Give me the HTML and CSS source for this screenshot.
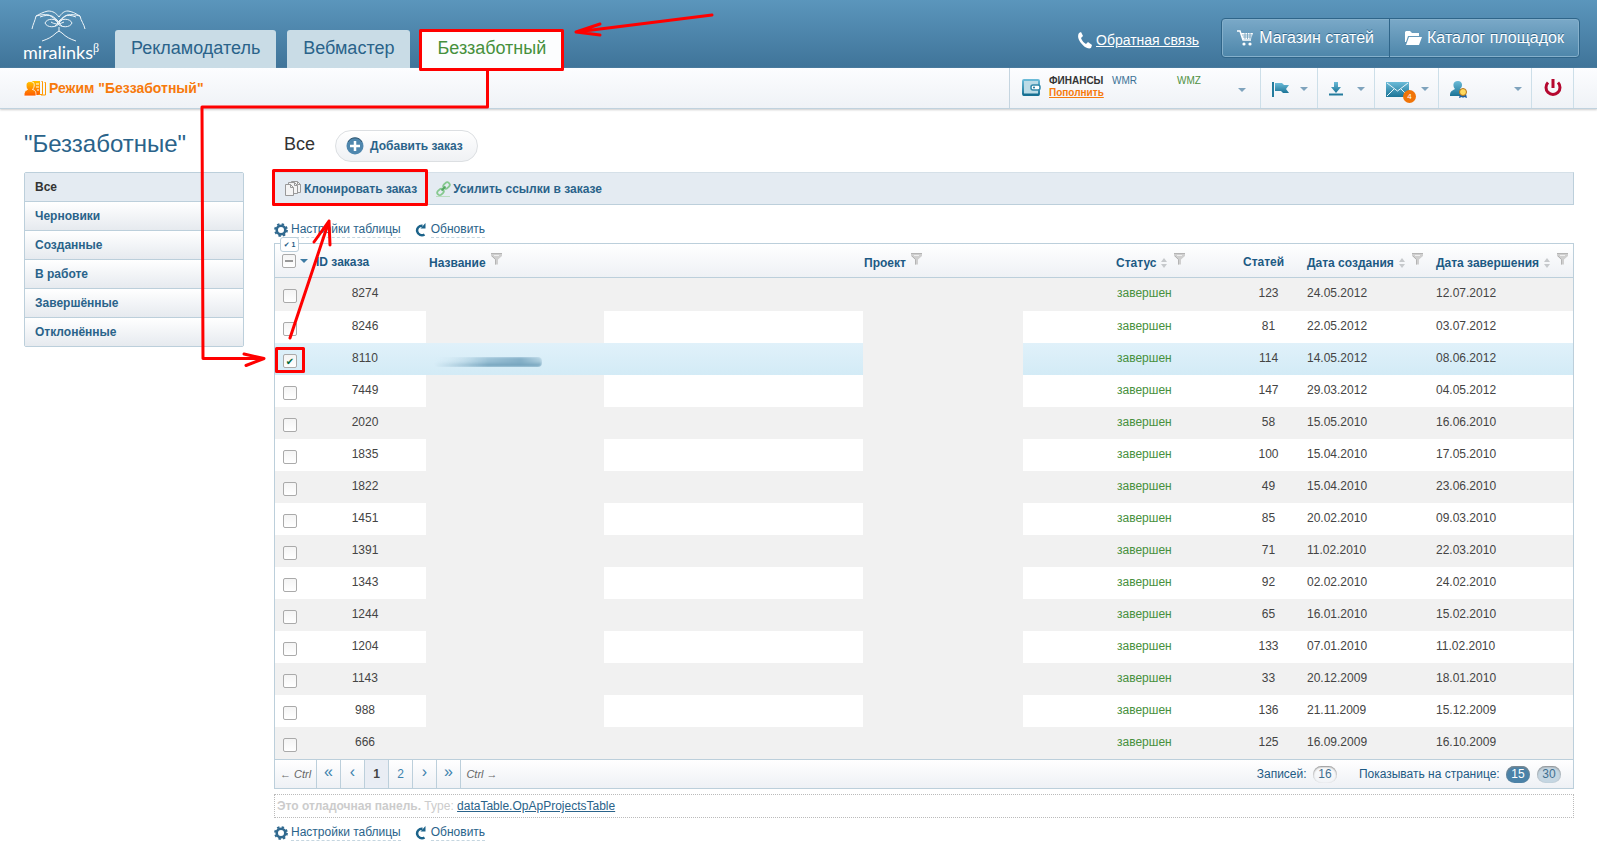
FILE: index.html
```
<!DOCTYPE html>
<html lang="ru">
<head>
  <meta charset="UTF-8">
  <meta name="viewport" content="width=device-width, initial-scale=1.0">
  <title>Miralinks - Беззаботный</title>
  <link rel="stylesheet" href="styles.css">
</head>
<body>
  <svg class="sprite" aria-hidden="true">
    <defs>
      <linearGradient id="teal" x1="0" y1="0" x2="0" y2="1"><stop offset="0" stop-color="#6bbbd8"/><stop offset="1" stop-color="#1b7497"/></linearGradient>
      <linearGradient id="fire" x1="0" y1="0" x2="0" y2="1"><stop offset="0" stop-color="#ffc400"/><stop offset="1" stop-color="#ff5a00"/></linearGradient>
    </defs>
    <symbol id="funnel" viewBox="0 0 12 12"><path d="M0 0h11v3L7 6.500v5H4v-5L0 3z" fill="#cfcfcf"/><path d="M0 .5h11M1 3l3.500 3.500v5" fill="none" stroke="#b4b4b4"/><path d="M3 2.500h5" stroke="#eee"/></symbol>
    <symbol id="sort" viewBox="0 0 6 10"><path d="M3 0l3 4H0zM3 10l3-4H0z" fill="#c6c9cc"/></symbol>
    <symbol id="gear" viewBox="0 0 14 14">
      <circle cx="7" cy="7" r="4.300" fill="none" stroke="#30698f" stroke-width="2.600"/>
      <circle cx="7" cy="7" r="6" fill="none" stroke="#30698f" stroke-width="1.800" stroke-dasharray="2.400 2.312"/>
    </symbol>
    <symbol id="reload" viewBox="0 0 14 14"><path d="M10.500 11.500A4.800 4.800 0 1 1 8.500 2.700" fill="none" stroke="#1c638a" stroke-width="2.500"/><path d="M11.500 0v5.500H6.500z" fill="#1c638a"/></symbol>
  </svg>

  <header class="header">
    <a class="logo" href="#">
      <svg width="56" height="32" viewBox="0 0 56 32" fill="none" stroke="#eef5f9" stroke-width="1">
        <path d="M1 19C2 14 4 11 5 6c4-2 7-4 12-5 5 0 8 2 11 6M54 19C53 14 50 11 49 6 45 4 43 2 37 1c-4 0-6 2-9 6"/>
        <path d="M5 6c4-1 8-2 13-1l9 6M49 6c-4-1-8-2-13-1l-8 6M9 7c5-2 9-2 12-1 3 2 5 3 6 6M45 7c-5-2-8-2-11-1-3 2-4 3-6 6"/>
        <path d="M14 13c2-5 11-5 15 0-4 5-13 5-15 0zM26 13c4-5 13-5 15 0-2 5-11 5-15 0zM20 12c3 2 7 3 13 0M24 10l7 6M31 10l-7 6"/>
        <path d="M11 31c6-2 10-4 14-8l3-2 3 2c4 4 8 6 14 8M28 17v5"/>
      </svg>
      <span class="logo-name">miralinks<sup>β</sup></span>
    </a>
    <nav class="tabs">
      <a class="tab" href="#">Рекламодатель</a>
      <a class="tab" href="#">Вебмастер</a>
      <a class="tab active" href="#">Беззаботный</a>
    </nav>
    <a class="feedback" href="#">
      <svg width="16" height="17" viewBox="0 0 16 17"><path d="M2 1l2-1 2 4-2 2c1 3 3 5 5 6l2-2 4 3-1 3c-2 1-4 0-6-1C4 12-1 6 2 1z" fill="#fff"/></svg>
      <span>Обратная связь</span>
    </a>
    <div class="store">
      <a href="#">
        <svg width="17" height="16" viewBox="0 0 17 16"><path d="M0 1h3l3 9h8" fill="none" stroke="#fff" stroke-width="1.500"/><path d="M4 3h12l-2 6H6z" fill="#fff"/><path d="M5 5h10M6 7h9M8 3v6M10.500 3v6M13 3v6" stroke="#5c93b5" stroke-width=".7"/><circle cx="7" cy="14" r="1.600" fill="#fff"/><circle cx="13" cy="14" r="1.600" fill="#fff"/></svg>
        Магазин статей
      </a>
      <a href="#">
        <svg width="17" height="16" viewBox="0 0 17 16" fill="#fff"><path d="M0 2l1-1h4l2 2h7v3H3L1 12H0z"/><path d="M4 7h13l-3 8H1z"/></svg>
        Каталог площадок
      </a>
    </div>
  </header>

  <div class="subbar">
    <div class="mode">
      <svg width="22" height="17" viewBox="0 0 22 17">
        <path d="M8 1h8v14h-6z" fill="url(#fire)"/><path d="M17.500 1.500h1v13h-4M20.500 2.500h1V15H17" fill="none" stroke="#ff9a00"/>
        <path d="M12 4h3M12 7h3M13 10h2M9 3h1" stroke="#fff"/>
        <path d="M6 1.500c6 0 4.500 6 2.500 8 3 1 3.500 2 3.500 6.500H0c0-4 1-5.500 3.500-6.500C1.500 7.500 1 1.500 6 1.500z" fill="url(#fire)" stroke="#fcfdff" stroke-width=".8"/>
      </svg>
      Режим "Беззаботный"
    </div>
    <div class="finance">
      <svg width="19" height="17" viewBox="0 0 19 17"><rect x="1" y="1" width="16" height="15" rx="1" fill="#bcdbe6" stroke="url(#teal)" stroke-width="2"/><path d="M1 15.500h16" stroke="#176f91" stroke-width="2"/><rect x="9" y="6" width="9" height="5" rx="2" fill="#fff" stroke="#3489a9" stroke-width="1.500"/><circle cx="12" cy="8.500" r="1" fill="#1b7497"/></svg>
      <div class="finance-text"><b>ФИНАНСЫ</b><a href="#">Пополнить</a></div>
      <span class="wmr">WMR</span>
      <span class="wmz">WMZ</span>
      <i class="arrow"></i>
    </div>
    <div class="tool">
      <svg width="18" height="16" viewBox="0 0 18 16"><path d="M1 1v15" stroke="#237b9d" stroke-width="2"/><path d="M3 2h7l2 2h5l-3 4 3 4h-6l-2-2H3z" fill="url(#teal)"/></svg>
      <i class="arrow"></i>
    </div>
    <div class="tool">
      <svg width="14" height="14" viewBox="0 0 14 14"><path d="M5 0h4v5h3l-5 6-5-6h3z" fill="url(#teal)"/><path d="M0 12.500h14" stroke="#237b9d" stroke-width="2"/></svg>
      <i class="arrow"></i>
    </div>
    <div class="tool mail">
      <span class="envelope">
        <svg width="23" height="15" viewBox="0 0 23 15"><path d="M0 0h23v15H0z" fill="url(#teal)"/><path d="M1 1l10.500 8L22 1M1 14l7-7M22 14l-7-7" fill="none" stroke="#e8f5fa"/></svg>
        <span class="badge">4</span>
      </span>
      <i class="arrow"></i>
    </div>
    <div class="tool user">
      <svg width="18" height="19" viewBox="0 0 18 19"><path d="M8 1c5 0 5 6 2 8 3 1 5 2 5 7H0c0-4 1-5 5-7C3 7 2 1 8 1z" fill="url(#teal)"/><path d="M10 14l-1 4 3-1 1 1 1-1 3 1-1-4" fill="#1f5fa0"/><circle cx="13" cy="12" r="3.500" fill="#ffd95e" stroke="#b3731a"/></svg>
      <i class="arrow"></i>
    </div>
    <div class="tool power">
      <svg width="18" height="18" viewBox="0 0 18 18" fill="none" stroke="#b5072f" stroke-width="3"><path d="M4 3.500a7 7 0 1 0 10 0M9 0v9"/></svg>
    </div>
  </div>

  <div class="page">
    <aside class="sidebar">
      <h1>"Беззаботные"</h1>
      <ul class="menu">
        <li class="current"><a href="#">Все</a></li>
        <li><a href="#">Черновики</a></li>
        <li><a href="#">Созданные</a></li>
        <li><a href="#">В работе</a></li>
        <li><a href="#">Завершённые</a></li>
        <li><a href="#">Отклонённые</a></li>
      </ul>
    </aside>

    <main class="content">
      <div class="title">
        <h2>Все</h2>
        <button class="add" type="button">
          <svg width="18" height="18" viewBox="0 0 18 18"><circle cx="9" cy="9" r="8.500" fill="#4f87ae"/><path d="M2 5a8 8 0 0 1 14 0" fill="none" stroke="#33566e"/><path d="M9 4v10M4 9h10" stroke="#fff" stroke-width="2.500"/></svg>
          Добавить заказ
        </button>
      </div>

      <div class="actions">
        <a href="#">
          <svg width="17" height="17" viewBox="0 0 17 17" fill="#f4f4f4" stroke="#999"><path d="M6.500 1.500h6l3 3v8h-9z"/><path d="M3.500 2.500h6l3 3v8h-9z"/><path d="M.5 4.500h5l3 3v8h-8z"/><path d="M5.500 4.500v3h3M9.500 2.500v3h3M12.500 1.500v3h3" fill="none"/></svg>
          Клонировать заказ
        </a>
        <a href="#">
          <svg width="15" height="16" viewBox="0 0 15 16" fill="none" stroke="#86c98f" stroke-width="1.800"><rect x="7" y="2" width="7" height="5" rx="2.500" transform="rotate(-45 10.500 4.500)"/><rect x="1" y="8.500" width="7" height="5" rx="2.500" transform="rotate(-45 4.500 11)"/><path d="M5.500 9.500l4-4" stroke="#55a763"/><path d="M0 15.500h14" stroke="#b9dcbf" stroke-width="1"/></svg>
          Усилить ссылки в заказе
        </a>
      </div>

      <div class="table-links">
        <svg width="14" height="14"><use href="#gear"/></svg><a href="#">Настройки таблицы</a>
        <svg width="14" height="14"><use href="#reload"/></svg><a href="#">Обновить</a>
      </div>

      <div class="grid">
        <table>
          <colgroup>
            <col class="c-check"><col class="c-id"><col><col class="c-project"><col class="c-status"><col class="c-count"><col class="c-created"><col class="c-done">
          </colgroup>
          <thead>
            <tr>
              <th class="pick">
                <span class="picked">✔ 1</span>
                <input type="checkbox" class="partial" aria-label="Выбрать все"><i class="arrow"></i>
              </th>
              <th class="id">ID заказа</th>
              <th>Название<svg class="funnel" width="12" height="12"><use href="#funnel"/></svg></th>
              <th>Проект<svg class="funnel" width="12" height="12"><use href="#funnel"/></svg></th>
              <th>Статус<svg class="sort" width="6" height="10"><use href="#sort"/></svg><svg class="funnel" width="12" height="12"><use href="#funnel"/></svg></th>
              <th>Статей</th>
              <th class="created">Дата создания<svg class="sort" width="6" height="10"><use href="#sort"/></svg><svg class="funnel" width="12" height="12"><use href="#funnel"/></svg></th>
              <th>Дата завершения<svg class="sort" width="6" height="10"><use href="#sort"/></svg><svg class="funnel" width="12" height="12"><use href="#funnel"/></svg></th>
            </tr>
          </thead>
          <tbody id="orders"></tbody>
        </table>
        <div class="pager">
          <span class="key">← Ctrl</span>
          <a class="step" href="#">«</a>
          <a class="step" href="#">‹</a>
          <a class="now" href="#">1</a>
          <a href="#">2</a>
          <a class="step" href="#">›</a>
          <a class="step" href="#">»</a>
          <span class="key last">Ctrl →</span>
          <span class="total">Записей: <span class="pill">16</span></span>
          <span class="per-page">Показывать на странице: <a class="pill on" href="#">15</a><a class="pill off" href="#">30</a></span>
        </div>
      </div>

      <div class="debug"><b>Это отладочная панель.</b> Type: <a href="#">dataTable.OpApProjectsTable</a></div>

      <div class="table-links bottom">
        <svg width="14" height="14"><use href="#gear"/></svg><a href="#">Настройки таблицы</a>
        <svg width="14" height="14"><use href="#reload"/></svg><a href="#">Обновить</a>
      </div>
    </main>
  </div>

  <!-- hints drawn over the page -->
  <svg class="hints" width="720" height="380" fill="none" stroke="#f00" stroke-width="3" stroke-linejoin="round" stroke-linecap="round">
    <rect x="420.500" y="30.500" width="142" height="39"/>
    <path d="M712 15L576 32M600 24l-24 8 24 3"/>
    <path d="M487.500 71v36H202l1 251.500h60M244 354l20 4.500-18 7"/>
    <rect x="273.500" y="170.500" width="153" height="34"/>
    <rect x="276.500" y="348.500" width="27" height="23"/>
    <path d="M290 338l39-117M314 242l15-21 1 24"/>
  </svg>

  <script>
    var orders = [
      ['8274', '123', '24.05.2012', '12.07.2012'],
      ['8246', '81', '22.05.2012', '03.07.2012'],
      ['8110', '114', '14.05.2012', '08.06.2012'],
      ['7449', '147', '29.03.2012', '04.05.2012'],
      ['2020', '58', '15.05.2010', '16.06.2010'],
      ['1835', '100', '15.04.2010', '17.05.2010'],
      ['1822', '49', '15.04.2010', '23.06.2010'],
      ['1451', '85', '20.02.2010', '09.03.2010'],
      ['1391', '71', '11.02.2010', '22.03.2010'],
      ['1343', '92', '02.02.2010', '24.02.2010'],
      ['1244', '65', '16.01.2010', '15.02.2010'],
      ['1204', '133', '07.01.2010', '11.02.2010'],
      ['1143', '33', '20.12.2009', '18.01.2010'],
      ['988', '136', '21.11.2009', '15.12.2009'],
      ['666', '125', '16.09.2009', '16.10.2009']
    ];
    var html = '';
    orders.forEach(function (o) {
      var picked = o[0] === '8110';
      html += '<tr' + (picked ? ' class="selected"' : '') + '>' +
        '<td class="pick"><input type="checkbox" aria-label="Заказ ' + o[0] + '"' + (picked ? ' checked' : '') + '></td>' +
        '<td class="center">' + o[0] + '</td>' +
        '<td class="name">' + (picked ? '<span class="smudge"></span>' : '') + '</td>' +
        '<td class="project"></td>' +
        '<td class="status">завершен</td>' +
        '<td class="center">' + o[1] + '</td>' +
        '<td class="created">' + o[2] + '</td>' +
        '<td class="done">' + o[3] + '</td></tr>';
    });
    document.getElementById('orders').innerHTML = html;
  </script>
</body>
</html>
```
FILE: styles.css
```
* {
  box-sizing: border-box;
}
body {
  margin: 0;
  font-family: "Liberation Sans", Arial, sans-serif;
  font-size: 12px;
  line-height: 16px;
  color: #444;
  background: #fff;
}
a {
  color: #2a638a;
}
svg {
  flex: none;
}
.sprite {
  position: absolute;
  width: 0;
  height: 0;
}
.arrow {
  flex: none;
  width: 0;
  height: 0;
  border: 4px solid transparent;
  border-top-color: #7fa3bd;
  border-bottom: 0;
}

/* header */
.header {
  display: flex;
  height: 68px;
  padding: 0 17px 0 23px;
  background: linear-gradient(#5b96bc, #3f7499);
}
.logo {
  width: 92px;
  padding-top: 10px;
  color: #fff;
  text-decoration: none;
}
.logo svg {
  display: block;
  margin-left: 8px;
}
.logo-name {
  display: block;
  font-family: Lato, sans-serif;
  font-size: 18px;
  line-height: 20px;
}
.logo sup {
  font-family: "Liberation Serif", serif;
  font-size: 12px;
  line-height: 0;
}
.tabs {
  display: flex;
  gap: 11px;
  align-items: flex-end;
}
.tab {
  height: 38px;
  padding: 0 16px;
  border-radius: 3px 3px 0 0;
  background: #c9dce6;
  font-size: 18px;
  line-height: 36px;
  text-decoration: none;
}
.tab.active {
  background: #fcfdfe;
  color: #46903c;
}
.feedback {
  display: flex;
  gap: 3px;
  align-items: center;
  margin: 12px 22px 0 auto;
  color: #fff;
  font-size: 14px;
}
.store {
  display: flex;
  height: 40px;
  margin-top: 18px;
  border: 1px solid #2f6589;
  border-radius: 4px;
  background: linear-gradient(#7aa9c8, #4d86aa);
  box-shadow: inset 0 0 0 1px #85b0cb;
}
.store a {
  display: flex;
  gap: 5px;
  align-items: center;
  padding: 0 15px;
  color: #fff;
  font-size: 16px;
  text-decoration: none;
  text-shadow: 0 -1px 0 #2f6589;
}
.store a + a {
  border-left: 1px solid #2f6589;
}

/* second bar */
.subbar {
  display: flex;
  height: 41px;
  padding: 0 23px 0 24px;
  border-bottom: 1px solid #c0d2de;
  background: linear-gradient(#fcfdff, #eff2f6);
  box-shadow: 0 1px 2px #ccc;
}
.mode {
  display: flex;
  gap: 3px;
  align-items: center;
  margin-right: auto;
  color: #f77a0c;
  font-size: 14px;
  font-weight: bold;
}
.finance {
  display: flex;
  width: 251px;
  padding: 6px 14px 0 12px;
  border-left: 1px solid #c5d5e0;
  font-size: 10px;
  line-height: 13px;
}
.finance svg {
  margin: 5px 8px 0 0;
}
.finance-text {
  width: 63px;
}
.finance-text b {
  display: block;
  color: #333;
}
.finance-text a {
  display: block;
  color: #f77a0c;
  font-weight: bold;
  line-height: 12px;
}
.wmr {
  width: 65px;
  color: #3b7195;
}
.wmz {
  color: #4f9142;
}
.finance .arrow {
  margin: 14px 0 0 auto;
}
.tool {
  display: flex;
  align-items: center;
  justify-content: space-between;
  width: 57px;
  padding: 2px 9px 0 11px;
  border-left: 1px solid #cddfe9;
}
.tool.mail {
  width: 64px;
}
.tool.user {
  width: 93px;
}
.tool.power {
  width: 43px;
  padding: 0 12px;
  border-right: 1px solid #cddfe9;
}
.envelope {
  position: relative;
  height: 15px;
}
.envelope svg {
  display: block;
}
.badge {
  position: absolute;
  top: 8px;
  left: 17px;
  width: 13px;
  height: 13px;
  border-radius: 50%;
  background: #f07408;
  color: #fff;
  font-size: 8px;
  line-height: 13px;
  text-align: center;
}

/* page */
.page {
  display: flex;
  gap: 30px;
  padding: 20px 23px 0 24px;
}
.sidebar {
  flex: none;
  width: 220px;
}
h1 {
  height: 43px;
  margin: 0;
  color: #2a638a;
  font-size: 24px;
  font-weight: normal;
  line-height: 30px;
}
.menu {
  margin: 0;
  padding: 0;
  border: 1px solid #bccfdb;
  border-radius: 2px;
  list-style: none;
}
.menu li {
  background: linear-gradient(#fff, #e6eaef);
}
.menu li + li {
  border-top: 1px solid #bccfdb;
}
.menu .current {
  background: #e4ebf2;
}
.menu a {
  display: block;
  padding: 0 10px;
  font-size: 12px;
  font-weight: bold;
  line-height: 28px;
  text-decoration: none;
}
.menu .current a {
  color: #333;
}
.content {
  flex: 1;
  min-width: 0;
}
.title {
  display: flex;
  gap: 20px;
  height: 43px;
  padding-left: 10px;
}
h2 {
  margin: 0;
  color: #333;
  font-size: 18px;
  font-weight: normal;
  line-height: 30px;
}
.add {
  display: flex;
  gap: 6px;
  align-items: center;
  height: 32px;
  margin-top: 1px;
  padding: 0 14px 0 10px;
  border: 1px solid #dcdfe2;
  border-radius: 16px;
  background: linear-gradient(#fff, #eff1f4);
  color: #2a638a;
  font: bold 12px "Liberation Sans", Arial, sans-serif;
}
.actions {
  display: flex;
  gap: 19px;
  height: 33px;
  padding-left: 10px;
  border: 1px solid #bccfdb;
  border-top-color: #d5e0e8;
  background: #e4ebf2;
}
.actions a {
  display: flex;
  gap: 2px;
  align-items: center;
  font-weight: bold;
  text-decoration: none;
}
.table-links {
  display: flex;
  gap: 3px;
  align-items: center;
  padding: 16px 0 5px;
}
.table-links a {
  margin-right: 10px;
  border-bottom: 1px dashed #c5d6e0;
  text-decoration: none;
}
.table-links.bottom {
  padding: 6px 0 0;
}

/* table */
.grid {
  border: 1px solid #bccfdb;
}
table {
  width: 100%;
  border-collapse: collapse;
  table-layout: fixed;
}
.c-check {
  width: 31px;
}
.c-id {
  width: 118px;
}
.c-project {
  width: 252px;
}
.c-status {
  width: 127px;
}
.c-count {
  width: 61px;
}
.c-created {
  width: 132px;
}
.c-done {
  width: 142px;
}
thead tr {
  background: linear-gradient(#fff, #eef1f5);
}
th {
  height: 33px;
  padding: 3px 5px 0;
  border-bottom: 1px solid #bccfdb;
  color: #1d5a84;
  text-align: left;
  white-space: nowrap;
}
th.id {
  padding-left: 10px;
}
.funnel {
  margin: 0 0 2px 5px;
}
.sort {
  margin: 0 2px -1px 5px;
}
td {
  height: 32px;
  padding: 0 5px 2px;
}
tbody tr:first-child td {
  height: 34px;
}
tbody tr:nth-child(odd) {
  background: #f1f1f1;
}
tbody tr.selected {
  background: linear-gradient(#e0f1fa, #d3ebf6);
}
.center {
  text-align: center;
}
.created {
  padding-left: 8px;
}
.status {
  padding-left: 6px;
  color: #46903c;
}
/* hidden values */
.name {
  background: linear-gradient(#f1f1f1, #f1f1f1) 2px 0 / 178px 100% no-repeat;
}
.selected .name {
  background: none;
}
.project {
  background: linear-gradient(#f1f1f1, #f1f1f1) 4px 0 / 160px 100% no-repeat;
}
.smudge {
  display: block;
  width: 108px;
  height: 10px;
  margin: 8px 0 0 5px;
  border-radius: 4px;
  background: linear-gradient(transparent 40%, #74a3bd 90%), linear-gradient(90deg, transparent, #a5c9dc 40%, #85b0c8 80%, #b5d3e2);
  -webkit-mask: linear-gradient(90deg, transparent, #000 50%);
  mask: linear-gradient(90deg, transparent, #000 50%);
  filter: blur(1px);
}
input[type="checkbox"] {
  appearance: none;
  display: block;
  width: 14px;
  height: 14px;
  margin: 0;
  border: 1px solid #aaa;
  border-radius: 2px;
  background: linear-gradient(#f4f4f4, #fff);
}
input[type="checkbox"]:checked::before {
  content: "✔";
  display: block;
  color: #00693a;
  font: 10px/13px "DejaVu Sans", sans-serif;
  text-align: center;
}
.partial::before {
  content: "";
  display: block;
  width: 8px;
  height: 2px;
  margin: 5px 2px;
  background: #999;
}
td.pick {
  padding: 4px 8px 0;
}
th.pick {
  position: relative;
  padding: 0 0 0 7px;
}
th.pick input {
  display: inline-block;
  vertical-align: middle;
}
th.pick .arrow {
  display: inline-block;
  margin-left: 4px;
  border-top-color: #3d7ba3;
  vertical-align: middle;
}
.picked {
  position: absolute;
  top: -7px;
  left: 5px;
  width: 19px;
  height: 15px;
  border: 1px solid #bccfdb;
  border-radius: 3px;
  background: #fff;
  font: bold 7px/13px "Liberation Sans", "DejaVu Sans", sans-serif;
  text-align: center;
}

/* pager */
.pager {
  display: flex;
  align-items: center;
  height: 29px;
  border-top: 1px solid #bccfdb;
  background: linear-gradient(#fff, #eef1f5);
  color: #1d5a84;
}
.pager > a,
.key {
  width: 24px;
  border-right: 1px solid #bccfdb;
  color: #3d82ad;
  line-height: 28px;
  text-align: center;
  text-decoration: none;
}
.pager > .key {
  width: 42px;
  color: #666;
  font-size: 11px;
  font-style: italic;
}
.pager > .last {
  border-right: 0;
}
.pager > .step {
  height: 28px;
  font-size: 16px;
  line-height: 24px;
}
.pager > .now {
  background: #e9edf4;
  color: #444;
  font-weight: bold;
}
.total {
  margin: 0 22px 0 auto;
}
.per-page {
  margin-right: 12px;
}
.pill {
  display: inline-block;
  width: 24px;
  height: 17px;
  margin-left: 3px;
  border-radius: 9px;
  box-shadow: inset 0 1px 2px #888;
  color: #3f6f90;
  line-height: 17px;
  text-align: center;
  text-decoration: none;
}
.pill.on {
  background: #4a82a8;
  color: #fff;
}
.pill.off {
  margin-left: 7px;
  background: #c5d6e2;
}
.debug {
  margin-top: 5px;
  padding: 3px 2px;
  border: 1px dotted #bbb;
  color: #ccc;
}
.hints {
  position: absolute;
  top: 0;
  left: 0;
  pointer-events: none;
}
```
